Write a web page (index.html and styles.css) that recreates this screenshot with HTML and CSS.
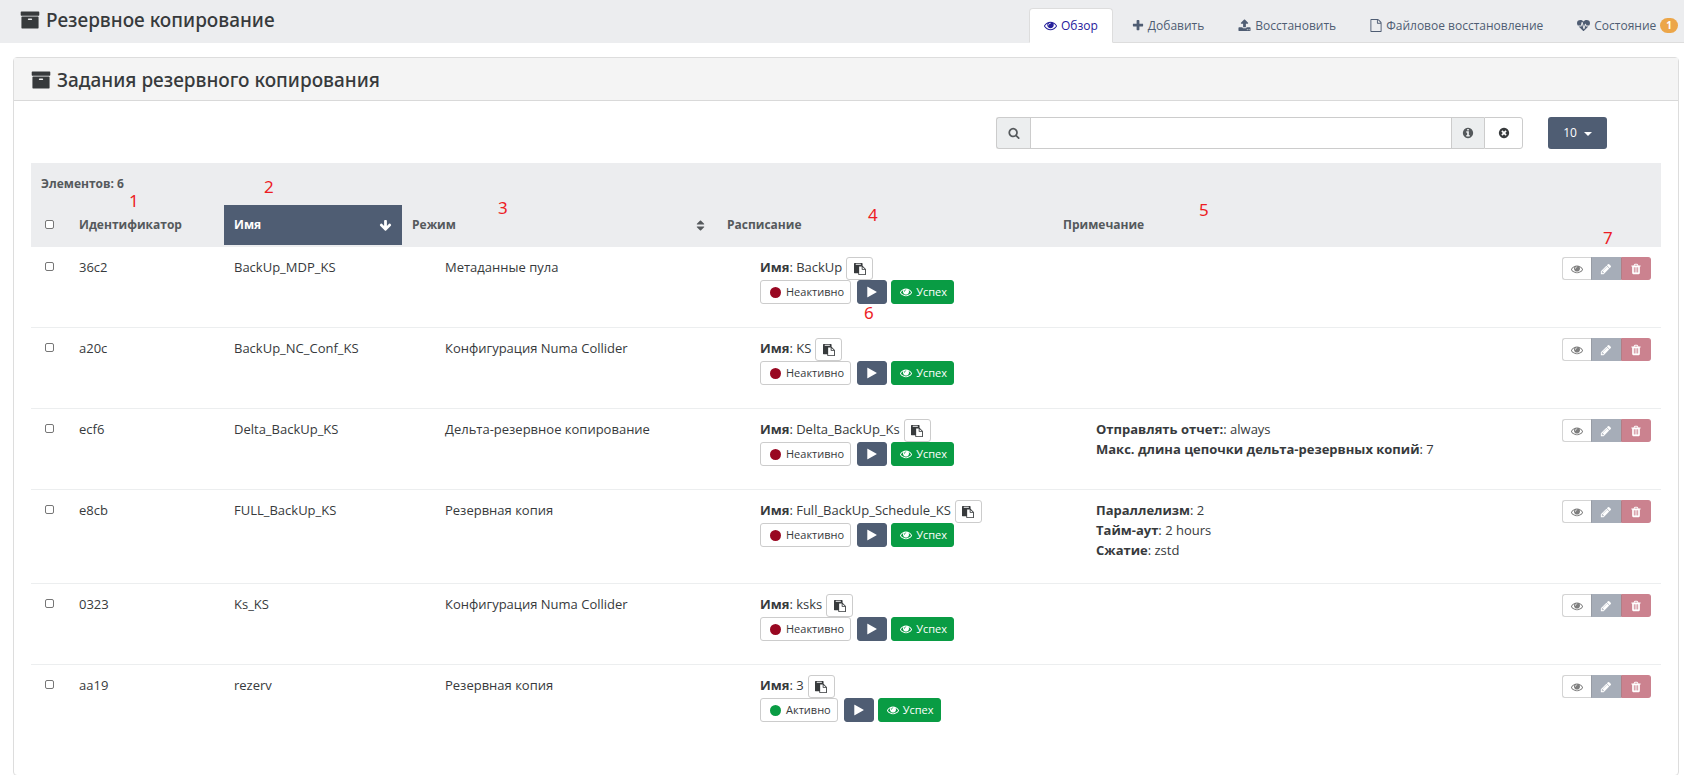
FILE: index.html
```html
<!DOCTYPE html>
<html lang="ru">
<head>
<meta charset="utf-8">
<title>Резервное копирование</title>
<link rel="stylesheet" href="styles.css">
</head>
<body>
<svg class="sprite" aria-hidden="true">
  <symbol id="archive" viewBox="0 0 1792 1792"><path d="M1088 832q0-26-19-45t-45-19h-256q-26 0-45 19t-19 45 19 45 45 19h256q26 0 45-19t19-45zm576-192v960q0 26-19 45t-45 19h-1408q-26 0-45-19t-19-45v-960q0-26 19-45t45-19h1408q26 0 45 19t19 45zm64-448v256q0 26-19 45t-45 19h-1536q-26 0-45-19t-19-45v-256q0-26 19-45t45-19h1536q26 0 45 19t19 45z"/></symbol>
  <symbol id="eye" viewBox="0 0 1792 1792"><path d="M1664 960q-152-236-381-353 61 104 61 225 0 185-131.5 316.5t-316.5 131.5-316.5-131.5-131.5-316.5q0-121 61-225-229 117-381 353 133 205 333.5 326.5t434.5 121.5 434.5-121.5 333.5-326.5zm-720-384q0-20-14-34t-34-14q-125 0-214.5 89.5t-89.5 214.5q0 20 14 34t34 14 34-14 14-34q0-86 61-147t147-61q20 0 34-14t14-34zm848 384q0 34-20 69-140 230-376.5 368.5t-499.5 138.5-499.5-139-376.5-368q-20-35-20-69t20-69q140-229 376.5-368t499.5-139 499.5 139 376.5 368q20 35 20 69z"/></symbol>
  <symbol id="plus" viewBox="128 0 1536 1792"><path d="M1600 736v192q0 40-28 68t-68 28h-416v416q0 40-28 68t-68 28h-192q-40 0-68-28t-28-68v-416h-416q-40 0-68-28t-28-68v-192q0-40 28-68t68-28h416v-416q0-40 28-68t68-28h192q40 0 68 28t28 68v416h416q40 0 68 28t28 68z"/></symbol>
  <symbol id="upload" viewBox="0 0 1792 1792"><path d="M1344 1472q0-26-19-45t-45-19-45 19-19 45 19 45 45 19 45-19 19-45zm256 0q0-26-19-45t-45-19-45 19-19 45 19 45 45 19 45-19 19-45zm128-224v320q0 40-28 68t-68 28h-1472q-40 0-68-28t-28-68v-320q0-40 28-68t68-28h427q21 56 70.5 92t110.5 36h256q61 0 110.5-36t70.5-92h427q40 0 68 28t28 68zm-325-648q-17 40-59 40h-256v448q0 26-19 45t-45 19h-256q-26 0-45-19t-19-45v-448h-256q-42 0-59-40-17-39 14-69l448-448q18-19 45-19t45 19l448 448q31 30 14 69z"/></symbol>
  <symbol id="file" viewBox="128 0 1536 1792"><path d="M1596 380q28 28 48 76t20 88v1152q0 40-28 68t-68 28h-1344q-40 0-68-28t-28-68v-1600q0-40 28-68t68-28h896q40 0 88 20t76 48zm-444-244v376h376q-10-29-22-41l-313-313q-12-12-41-22zm384 1528v-1024h-416q-40 0-68-28t-28-68v-416h-768v1536h1280z"/></symbol>
  <symbol id="heartbeat" viewBox="0 0 1792 1792"><path d="M1280 1024h305q-5 6-10 10.5t-9 7.5l-3 4-623 600q-18 18-44 18t-44-18l-624-602q-5-2-21-20h369q22 0 39.5-13.5t22.5-34.5l70-281 190 667q6 20 23 33t39 13q21 0 38-13t23-33l146-485 56 112q18 35 57 35zm512-428q0 145-103 300h-369l-111-221q-8-17-25.5-27t-36.5-8q-45 5-56 46l-129 430-196-686q-6-20-23.5-33t-39.5-13-39 13.5-22 34.5l-116 464h-423q-103-155-103-300 0-220 127-344t351-124q62 0 126.5 21.5t120 58 95.5 68.5 76 68q36-36 76-68t95.5-68.5 120-58 126.5-21.5q224 0 351 124t127 344z"/></symbol>
  <symbol id="search" viewBox="0 0 1792 1792"><path d="M1216 832q0-185-131.5-316.5t-316.5-131.5-316.5 131.5-131.5 316.5 131.5 316.5 316.5 131.5 316.5-131.5 131.5-316.5zm512 832q0 52-38 90t-90 38q-54 0-90-38l-343-342q-179 124-399 124-143 0-273.5-55.5t-225-150-150-225-55.5-273.5 55.5-273.5 150-225 225-150 273.5-55.5 273.5 55.5 225 150 150 225 55.5 273.5q0 220-124 399l343 343q37 37 37 90z"/></symbol>
  <symbol id="info" viewBox="0 0 1792 1792"><path d="M1152 1376v-160q0-14-9-23t-23-9h-96v-512q0-14-9-23t-23-9h-320q-14 0-23 9t-9 23v160q0 14 9 23t23 9h96v320h-96q-14 0-23 9t-9 23v160q0 14 9 23t23 9h448q14 0 23-9t9-23zm-128-896v-160q0-14-9-23t-23-9h-192q-14 0-23 9t-9 23v160q0 14 9 23t23 9h192q14 0 23-9t9-23zm640 416q0 209-103 385.5t-279.5 279.5-385.5 103-385.5-103-279.5-279.5-103-385.5 103-385.5 279.5-279.5 385.5-103 385.5 103 279.5 279.5 103 385.5z"/></symbol>
  <symbol id="clear" viewBox="0 0 1792 1792"><path d="M1277 1122q0-26-19-45l-181-181 181-181q19-19 19-45 0-27-19-46l-90-90q-19-19-46-19-26 0-45 19l-181 181-181-181q-19-19-45-19-27 0-46 19l-90 90q-19 19-19 46 0 26 19 45l181 181-181 181q-19 19-19 45 0 27 19 46l90 90q19 19 46 19 26 0 45-19l181-181 181 181q19 19 45 19 27 0 46-19l90-90q19-19 19-46zm387-226q0 209-103 385.5t-279.5 279.5-385.5 103-385.5-103-279.5-279.5-103-385.5 103-385.5 279.5-279.5 385.5-103 385.5 103 279.5 279.5 103 385.5z"/></symbol>
  <symbol id="arrow-down" viewBox="0 0 1792 1792"><path d="M1675 832q0 53-37 90l-651 652q-39 37-91 37-53 0-90-37l-651-652q-38-36-38-90 0-53 38-91l74-75q39-37 91-37 53 0 90 37l294 294v-704q0-52 38-90t90-38h128q52 0 90 38t38 90v704l294-294q37-37 90-37 52 0 91 37l75 75q37 39 37 91z"/></symbol>
  <symbol id="sort" viewBox="0 0 1792 1792"><path d="M1408 1088q0 26-19 45l-448 448q-19 19-45 19t-45-19l-448-448q-19-19-19-45t19-45 45-19h896q26 0 45 19t19 45zm0-384q0 26-19 45t-45 19h-896q-26 0-45-19t-19-45 19-45l448-448q19-19 45-19t45 19l448 448q19 19 19 45z"/></symbol>
  <symbol id="paste" viewBox="0 0 1792 1792"><path d="M768 1664h896v-640h-416q-40 0-68-28t-28-68v-416h-384v1152zm256-1440v-64q0-13-9.5-22.5t-22.5-9.5h-704q-13 0-22.5 9.5t-9.5 22.5v64q0 13 9.5 22.5t22.5 9.5h704q13 0 22.5-9.5t9.5-22.5zm256 672h299l-299-299v299zm512 128v672q0 40-28 68t-68 28h-960q-40 0-68-28t-28-68v-160h-544q-40 0-68-28t-28-68v-1344q0-40 28-68t68-28h1088q40 0 68 28t28 68v328q21 13 36 28l408 408q28 28 48 76t20 88z"/></symbol>
  <symbol id="play" viewBox="0 0 1792 1792"><path d="M1576 927l-1328 738q-23 13-39.500 3t-16.500-36v-1472q0-26 16.500-36t39.500 3l1328 738q23 13 23 31t-23 31z"/></symbol>
  <symbol id="pencil" viewBox="0 0 1792 1792"><path d="M491 1536l91-91-235-235-91 91v107h128v128h107zm523-928q0-22-22-22-10 0-17 7l-542 542q-7 7-7 17 0 22 22 22 10 0 17-7l542-542q7-7 7-17zm-54-192l416 416-832 832h-416v-416zm683 96q0 53-37 90l-166 166-416-416 166-165q36-38 90-38 53 0 91 38l235 234q37 39 37 91z"/></symbol>
  <symbol id="trash" viewBox="0 0 1792 1792"><path d="M704 1376v-704q0-14-9-23t-23-9h-64q-14 0-23 9t-9 23v704q0 14 9 23t23 9h64q14 0 23-9t9-23zm256 0v-704q0-14-9-23t-23-9h-64q-14 0-23 9t-9 23v704q0 14 9 23t23 9h64q14 0 23-9t9-23zm256 0v-704q0-14-9-23t-23-9h-64q-14 0-23 9t-9 23v704q0 14 9 23t23 9h64q14 0 23-9t9-23zm-544-992h448l-48-117q-7-9-17-11h-317q-10 2-17 11zm928 32v64q0 14-9 23t-23 9h-96v948q0 83-47 143.500t-113 60.500h-832q-66 0-113-58.500t-47-141.500v-952h-96q-14 0-23-9t-9-23v-64q0-14 9-23t23-9h309l70-167q15-37 54-63t79-26h320q40 0 79 26t54 63l70 167h309q14 0 23 9t9 23z"/></symbol>
</svg>

<header class="topbar">
  <h1 class="title"><svg class="icon-lg"><use href="#archive"/></svg>Резервное копирование</h1>
  <nav class="tabs">
    <a class="tab tab-active" href="#overview"><svg class="icon"><use href="#eye"/></svg>Обзор</a>
    <a class="tab" href="#new"><svg class="icon icon-narrow"><use href="#plus"/></svg>Добавить</a>
    <a class="tab" href="#restore"><svg class="icon"><use href="#upload"/></svg>Восстановить</a>
    <a class="tab" href="#file-restore"><svg class="icon icon-narrow"><use href="#file"/></svg>Файловое восстановление</a>
    <a class="tab tab-last" href="#health"><svg class="icon"><use href="#heartbeat"/></svg>Состояние<span class="badge">1</span></a>
  </nav>
</header>

<main class="panel">
  <h2 class="panel-header title"><svg class="icon-lg"><use href="#archive"/></svg>Задания резервного копирования</h2>
  <div class="panel-body">
    <div class="toolbar">
      <div class="search">
        <label class="addon addon-search" for="filter"><svg class="icon-sm"><use href="#search"/></svg></label>
        <input class="search-input" id="filter" type="text" aria-label="Фильтр">
        <button class="addon addon-info" type="button" aria-label="Справка"><svg class="icon-sm"><use href="#info"/></svg></button>
        <button class="addon addon-clear" type="button" aria-label="Очистить"><svg class="icon-sm"><use href="#clear"/></svg></button>
      </div>
      <button class="page-size" type="button">10<span class="caret"></span></button>
    </div>

    <table class="jobs">
      <colgroup><col class="c-check"><col class="c-id"><col class="c-name"><col class="c-mode"><col class="c-schedule"><col class="c-note"><col class="c-actions"></colgroup>
      <thead>
        <tr><th class="count" colspan="7">Элементов: 6</th></tr>
        <tr>
          <th class="check"><input type="checkbox" aria-label="Выбрать все"></th>
          <th>Идентификатор</th>
          <th class="sorted"><span class="th-inner">Имя<svg class="icon"><use href="#arrow-down"/></svg></span></th>
          <th><span class="th-inner">Режим<svg class="icon"><use href="#sort"/></svg></span></th>
          <th>Расписание</th>
          <th colspan="2">Примечание</th>
        </tr>
      </thead>
      <tbody id="rows"></tbody>
    </table>
  </div>
</main>

<div class="mark mark-1">1</div>
<div class="mark mark-2">2</div>
<div class="mark mark-3">3</div>
<div class="mark mark-4">4</div>
<div class="mark mark-5">5</div>
<div class="mark mark-6">6</div>
<div class="mark mark-7">7</div>
<script src="app.js"></script>
</body>
</html>
```
FILE: styles.css
```css
* { box-sizing: border-box; }
body {
  margin: 0;
  background: #fff;
  color: #373a3c;
  font: 13px/20px "Open Sans", "Noto Sans", sans-serif;
}
button, input { font: inherit; color: inherit; margin: 0; }
button { cursor: pointer; }
svg { fill: currentColor; flex: none; }
.sprite { position: absolute; width: 0; height: 0; }
.icon { width: 13px; height: 13px; }
.icon-narrow { width: 12px; }
.icon-sm { width: 12px; height: 12px; }
.icon-lg { width: 20px; height: 20px; }

.topbar {
  display: flex;
  justify-content: space-between;
  height: 43px;
  padding-left: 20px;
  background: #ecedef;
}
.title {
  display: flex;
  align-items: center;
  gap: 6px;
  margin: 0;
  font: 500 19px/24px "Noto Sans", "Open Sans", sans-serif;
}
.topbar .title { height: 40px; }
.tabs { display: flex; align-items: flex-end; gap: 4px; border-bottom: 1px solid #ddd; }
.tab {
  display: flex;
  align-items: center;
  gap: 4px;
  height: 35px;
  margin-bottom: -1px;
  padding: 0 14px;
  border: 1px solid transparent;
  border-radius: 4px 4px 0 0;
  color: #4f5d73;
  font-size: 12px;
  text-decoration: none;
  white-space: nowrap;
}
.tab-active { background: #fff; border-color: #ddd #ddd #fff; color: #26209b; }
.tab-last { padding-right: 5px; }
.badge {
  padding: 0 6px;
  border-radius: 8px;
  background: #eca649;
  color: #fff;
  font-size: 10px;
  font-weight: 700;
  line-height: 15px;
}

.panel { margin: 14px 5px 0 13px; border: 1px solid #ddd; border-radius: 4px; }
.panel-header {
  height: 43px;
  padding: 2px 17px 0;
  border-bottom: 1px solid #d9d9d9;
  background: #f4f4f4;
}
.panel-body { padding: 16px 17px 30px; }
.toolbar { display: flex; justify-content: flex-end; gap: 25px; padding-right: 54px; margin-bottom: 14px; }
.search { display: flex; width: 527px; height: 32px; }
.addon {
  display: flex;
  align-items: center;
  justify-content: center;
  padding: 0;
  border: 1px solid #ccc;
  background: #eceeef;
  color: #55595c;
}
.addon-search { width: 34px; border-right: 0; border-radius: 3px 0 0 3px; }
.addon-info { width: 32px; border-width: 1px 0; }
.addon-clear { width: 39px; background: #fff; color: #373a3c; border-radius: 0 3px 3px 0; }
.search-input { flex: 1; min-width: 0; border: 1px solid #ccc; padding: 0 8px; }
.page-size {
  display: flex;
  align-items: center;
  justify-content: center;
  gap: 7px;
  width: 59px;
  height: 32px;
  border: 0;
  border-radius: 3px;
  background: #4f5d73;
  color: #fff;
  font-size: 12px;
}
.caret { border: 4px solid transparent; border-top-color: #fff; border-bottom: 0; margin-top: 2px; }

.jobs { width: 100%; table-layout: fixed; border-collapse: separate; border-spacing: 0; }
.c-check { width: 38px; }
.c-id { width: 155px; }
.c-name { width: 178px; }
.c-mode { width: 315px; }
.c-schedule { width: 336px; }
.c-actions { width: 110px; }
th, td { padding: 10px; text-align: left; vertical-align: top; }
th { font-size: 12px; }
.count { padding: 11px 10px; }
thead { background: #ecedef; color: #55595c; }
thead tr:last-child th { border-bottom: 2px solid #ecedef; }
thead .sorted { background: #4f5d73 padding-box; color: #fff; }
.th-inner { display: flex; align-items: center; justify-content: space-between; }
tbody tr + tr td { border-top: 1px solid #eceeef; }
.check input {
  display: block;
  appearance: none;
  width: 9px;
  height: 9px;
  margin: 5px 4px 0;
  border: 1px solid #767676;
  border-radius: 2px;
  background: #fff;
}
.list { margin: 0 0 13px; padding: 0 0 0 33px; list-style: none; }
.line { display: flex; gap: 4px; }
.btn {
  display: inline-flex;
  align-items: center;
  justify-content: center;
  height: 24px;
  padding: 0 9px;
  border: 1px solid #ccc;
  border-radius: 3px;
  background: #fff;
  font-size: 11px;
  line-height: 18px;
}
.btn-copy { width: 27px; height: 23px; padding: 0; }
.btn-state { gap: 5px; padding: 0 6px 0 9px; margin-right: 6px; }
.btn-run { width: 30px; padding: 0; border-color: #4f5d73; background: #4f5d73; color: #fff; margin-right: 4px; }
.btn-ok { gap: 4px; padding: 0 6px 0 8px; border-color: #099c44; background: #099c44; color: #fff; }
.buttons { display: flex; }
.dot { width: 11px; height: 11px; border-radius: 50%; background: #990822; }
.dot-on { background: #099c44; }
.group { display: flex; justify-content: flex-end; opacity: .5; }
.group .btn { width: 30px; height: 23px; padding: 0; }
.group .btn-view { width: 29px; border-color: #aaa; border-right: 0; border-radius: 3px 0 0 3px; color: #000; }
.group .btn-edit { border-color: #4f5d73; border-left-color: #303a4c; background: #4f5d73; color: #fff; border-radius: 0; }
.group .btn-del { border-color: #990822; border-left-color: #66000f; background: #990822; color: #fff; border-radius: 0 3px 3px 0; }

/* Numbered callouts drawn over the page */
.mark { position: absolute; color: #ed1c24; font: 17px/20px "Noto Sans", sans-serif; }
.mark-1 { left: 129px; top: 191px; }
.mark-2 { left: 264px; top: 177px; }
.mark-3 { left: 498px; top: 198px; }
.mark-4 { left: 868px; top: 205px; }
.mark-5 { left: 1199px; top: 200px; }
.mark-6 { left: 864px; top: 303px; }
.mark-7 { left: 1603px; top: 228px; }
```
FILE: app.js
```js
const jobs = [
  { id: '36c2', name: 'BackUp_MDP_KS', mode: 'Метаданные пула', schedule: 'BackUp' },
  { id: 'a20c', name: 'BackUp_NC_Conf_KS', mode: 'Конфигурация Numa Collider', schedule: 'KS' },
  { id: 'ecf6', name: 'Delta_BackUp_KS', mode: 'Дельта-резервное копирование', schedule: 'Delta_BackUp_Ks',
    notes: [['Отправлять отчет:', 'always'], ['Макс. длина цепочки дельта-резервных копий', '7']] },
  { id: 'e8cb', name: 'FULL_BackUp_KS', mode: 'Резервная копия', schedule: 'Full_BackUp_Schedule_KS',
    notes: [['Параллелизм', '2'], ['Тайм-аут', '2 hours'], ['Сжатие', 'zstd']] },
  { id: '0323', name: 'Ks_KS', mode: 'Конфигурация Numa Collider', schedule: 'ksks' },
  { id: 'aa19', name: 'rezerv', mode: 'Резервная копия', schedule: '3', active: true },
];

const icon = (name) => `<svg class="icon-sm"><use href="#${name}"/></svg>`;

document.getElementById('rows').innerHTML = jobs.map((job) => `
  <tr>
    <td class="check"><input type="checkbox" aria-label="Выбрать ${job.name}"></td>
    <td>${job.id}</td>
    <td>${job.name}</td>
    <td><ul class="list"><li>${job.mode}</li></ul></td>
    <td>
      <ul class="list">
        <li class="line"><span><strong>Имя</strong>: ${job.schedule}</span>
          <button class="btn btn-copy" type="button" aria-label="Копировать">${icon('paste')}</button></li>
        <li class="buttons">
          <button class="btn btn-state" type="button"><span class="dot${job.active ? ' dot-on' : ''}"></span>${job.active ? 'Активно' : 'Неактивно'}</button>
          <button class="btn btn-run" type="button" aria-label="Запустить">${icon('play')}</button>
          <button class="btn btn-ok" type="button">${icon('eye')}Успех</button>
        </li>
      </ul>
    </td>
    <td><ul class="list">${(job.notes || []).map(([k, v]) => `<li><strong>${k}</strong>: ${v}</li>`).join('')}</ul></td>
    <td>
      <div class="group">
        <button class="btn btn-view" type="button" aria-label="Просмотр">${icon('eye')}</button>
        <button class="btn btn-edit" type="button" aria-label="Изменить">${icon('pencil')}</button>
        <button class="btn btn-del" type="button" aria-label="Удалить">${icon('trash')}</button>
      </div>
    </td>
  </tr>`).join('');
```
